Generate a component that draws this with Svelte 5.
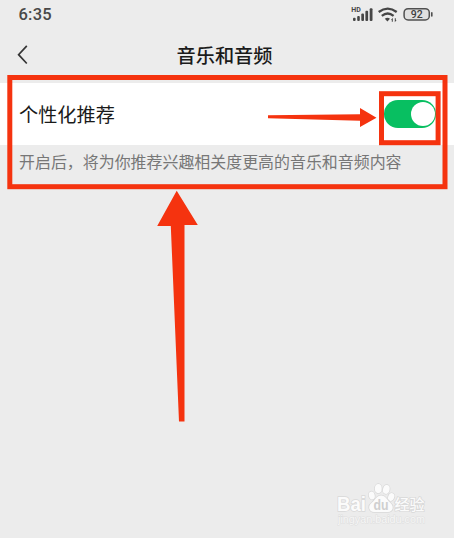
<script>
  let time = '6:35';
  let battery = 92;
  let recommend = true;

  function toggle() {
    recommend = !recommend;
  }
</script>

<div class="screen">
  <div class="status">
    <span class="time">{time}</span>
    <svg class="status-icons" width="84" height="22" viewBox="0 0 84 22">
      <g fill="#464646">
        <text x="1.3" y="8.4" class="hd">HD</text>
        <rect x="3" y="13.8" width="2.6" height="3.2" rx="1" />
        <rect x="7.2" y="12" width="2.6" height="5" rx="1" />
        <rect x="11.3" y="9.5" width="2.7" height="7.5" rx="1" />
        <rect x="15.4" y="6.8" width="2.7" height="10.2" rx="1" />
        <rect x="19.7" y="4.2" width="2.8" height="12.8" rx="1" />
        <path d="M34.8 14.8 Q37.5 12.8 40 14.8 L37.4 17.6Z" />
        <path d="M41 16l1.8-2.2v4h-1v-1.8zM46.6 16l-1.8 2.2v-4h1v1.8z" />
      </g>
      <g fill="none" stroke="#464646" stroke-width="2.3">
        <path d="M28.7 8 Q37.7 1.2 46.7 8" />
        <path d="M31.8 11.8 Q37.7 7.2 43.6 11.8" />
      </g>
      <rect x="54.1" y="4.7" width="25.2" height="11.2" rx="4" fill="#e0e0e0" stroke="#505050" stroke-width="1.5" />
      <path d="M81.8 8.8v3.2" stroke="#505050" stroke-width="1.6" stroke-linecap="round" />
      <text x="66.8" y="14.1" class="battery" text-anchor="middle">{battery}</text>
    </svg>
  </div>

  <div class="navbar">
    <svg class="back" width="14" height="22" viewBox="0 0 14 22">
      <path d="M10.8 1.9 L2.6 10.7 L10.8 19.5" fill="none" stroke="#353535" stroke-width="1.7" />
    </svg>
    <h1>音乐和音频</h1>
  </div>

  <div class="row">
    <span class="label">个性化推荐</span>
    <button class="switch" class:on={recommend} on:click={toggle} aria-label="个性化推荐">
      <span class="knob"></span>
    </button>
  </div>
  <p class="hint">开启后，将为你推荐兴趣相关度更高的音乐和音频内容</p>

  <!-- red marks over the setting -->
  <svg class="marks" width="454" height="538" viewBox="0 0 454 538">
    <g fill="none" stroke="#f5330f" stroke-width="5">
      <rect x="9.8" y="77.5" width="435.2" height="109.2" />
      <rect x="381.5" y="93.7" width="56.6" height="49" />
    </g>
    <g fill="#f5330f">
      <path d="M268 115.2 L360 114.2 V108 L376.5 117.8 L360 127 V120.8 L268 118.2Z" />
      <path d="M176.7 190.8 L197.8 225 H184.5 V421.4 H179 L170.8 226 H157.2Z" />
    </g>
  </svg>

  <svg class="watermark" width="96" height="46" viewBox="0 0 96 46">
    <g class="mark">
      <text x="0" y="28" class="latin" textLength="29" lengthAdjust="spacingAndGlyphs">Bai</text>
      <ellipse cx="34.8" cy="12.5" rx="2.9" ry="4" transform="rotate(-15 34.8 12.5)" />
      <ellipse cx="41.3" cy="5.6" rx="3.4" ry="4.6" />
      <ellipse cx="49.3" cy="6.4" rx="3.3" ry="4.5" transform="rotate(12 49.3 6.4)" />
      <ellipse cx="54.2" cy="14" rx="3" ry="3.9" transform="rotate(20 54.2 14)" />
      <path d="M44.2 12.5 C39.6 12.5 38.6 16.8 35 19.5 C29.5 23.6 32.8 29.8 38 29 H50 C56.2 29.5 57.6 23.3 53 19.5 C49.8 16.8 48.6 12.5 44.2 12.5Z" />
      <text x="57.5" y="27" class="cjk" textLength="30">经验</text>
      <text x="1" y="40" class="url" textLength="87" lengthAdjust="spacingAndGlyphs">jingyan.baidu.com</text>
    </g>
    <text x="36.5" y="27.3" class="du" textLength="15" lengthAdjust="spacingAndGlyphs">du</text>
  </svg>
</div>

<style>
  :global(body) {
    margin: 0;
    background: #ececec;
  }

  .screen {
    position: relative;
    width: 454px;
    height: 538px;
    overflow: hidden;
    background: #ececec;
    font-family: "Noto Sans CJK SC", sans-serif;
  }

  .status {
    display: flex;
    justify-content: space-between;
    height: 30px;
    padding: 4px 20px 0 18.5px;
    box-sizing: border-box;
  }

  .time {
    font: 500 16.5px/22px Roboto, sans-serif;
    letter-spacing: 0.2px;
    color: #484848;
  }

  .hd {
    font: 700 7px Roboto, sans-serif;
  }

  .battery {
    font: 500 10.5px Roboto, sans-serif;
    fill: #404040;
  }

  .navbar {
    display: grid;
    grid-template-columns: 40px 1fr 40px;
    align-items: center;
    height: 53px;
    padding: 0 10px 0 16px;
    box-sizing: border-box;
  }

  .back {
    margin-bottom: 3px;
  }

  h1 {
    margin: 0 0 3px;
    padding-right: 11px;
    text-align: center;
    font-size: 19.2px;
    font-weight: 500;
    line-height: 28px;
    color: #1b1b1b;
  }

  .row {
    display: flex;
    align-items: center;
    justify-content: space-between;
    height: 62px;
    padding: 0 18px 0 19px;
    box-sizing: border-box;
    background: #fff;
  }

  .label {
    font-size: 19.2px;
    line-height: 28px;
    color: #1a1a1a;
  }

  .switch {
    display: flex;
    align-items: center;
    width: 52px;
    height: 28px;
    padding: 0 1.5px;
    border: 0;
    border-radius: 14px;
    background: #d8d8d8;
  }

  .switch.on {
    justify-content: flex-end;
    background: #08bf61;
  }

  .knob {
    width: 24px;
    height: 24px;
    border-radius: 50%;
    background: #fff;
  }

  .hint {
    margin: 0;
    padding: 4px 19px;
    font-size: 15.95px;
    line-height: 24px;
    white-space: nowrap;
    color: #777;
  }

  .marks {
    position: absolute;
    top: 0;
    left: 0;
    pointer-events: none;
  }

  .watermark {
    position: absolute;
    right: 21px;
    bottom: 9px;
  }

  .mark {
    fill: #fbfbfb;
    stroke: #d8d8d8;
    stroke-width: 1.5px;
    paint-order: stroke;
  }

  .latin {
    font: 700 19.5px "Liberation Sans", sans-serif;
  }

  .cjk {
    font: 500 15px "Noto Sans CJK SC", sans-serif;
  }

  .url {
    font: 400 11px "Liberation Sans", sans-serif;
    fill: #f6f6f6;
    stroke: #dedede;
    stroke-width: 1px;
  }

  .du {
    font: 700 14px "Liberation Sans", sans-serif;
    fill: #cfcfcf;
  }
</style>
